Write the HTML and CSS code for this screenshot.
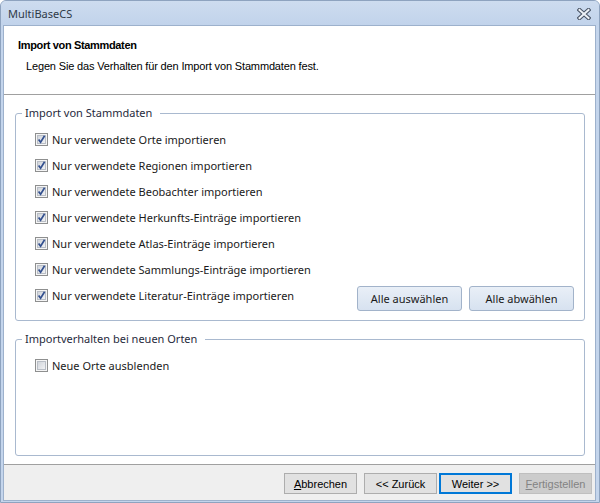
FILE: index.html
```html
<!DOCTYPE html>
<html lang="de">
<head>
<meta charset="utf-8">
<title>MultiBaseCS</title>
<link rel="stylesheet" href="styles.css">
</head>
<body>
<svg class="defs" width="0" height="0" aria-hidden="true">
  <defs>
    <linearGradient id="cbg" x1="0" y1="0" x2="1" y2="1">
      <stop offset="0" stop-color="#cfd3d9"/>
      <stop offset="1" stop-color="#f3f4f6"/>
    </linearGradient>
    <symbol id="cb-on" viewBox="0 0 13 13">
      <rect x="0.5" y="0.5" width="12" height="12" fill="#f5f5f5" stroke="#8e8f8f"/>
      <rect x="2.5" y="2.5" width="8" height="8" fill="url(#cbg)" stroke="#b9bec6"/>
      <path d="M3.6 6.4 L5.6 9.2 L9.6 2.8" fill="none" stroke="#33508f" stroke-width="1.7"/>
    </symbol>
    <symbol id="cb-off" viewBox="0 0 13 13">
      <rect x="0.5" y="0.5" width="12" height="12" fill="#f5f5f5" stroke="#8e8f8f"/>
      <rect x="2.5" y="2.5" width="8" height="8" fill="url(#cbg)" stroke="#b9bec6"/>
    </symbol>
  </defs>
</svg>
<div class="window">
  <div class="titlebar">
    <span class="title">MultiBaseCS</span>
    <svg class="close" width="14" height="12" viewBox="0 0 14 12">
      <path d="M2.5 2 L11.5 10 M11.5 2 L2.5 10" stroke="#4a5566" stroke-width="4.2" stroke-linecap="square"/>
      <path d="M2.5 2 L11.5 10 M11.5 2 L2.5 10" stroke="#eef2f7" stroke-width="2" stroke-linecap="square"/>
    </svg>
  </div>
  <div class="client">
    <div class="header">
      <div class="h-title">Import von Stammdaten</div>
      <div class="h-sub">Legen Sie das Verhalten für den Import von Stammdaten fest.</div>
    </div>
    <div class="body">
      <fieldset class="group g1">
        <legend>Import von Stammdaten</legend>
        <div class="rows">
          <div class="row"><svg class="cb"><use href="#cb-on"/></svg><span>Nur verwendete Orte importieren</span></div>
          <div class="row"><svg class="cb"><use href="#cb-on"/></svg><span>Nur verwendete Regionen importieren</span></div>
          <div class="row"><svg class="cb"><use href="#cb-on"/></svg><span>Nur verwendete Beobachter importieren</span></div>
          <div class="row"><svg class="cb"><use href="#cb-on"/></svg><span>Nur verwendete Herkunfts-Einträge importieren</span></div>
          <div class="row"><svg class="cb"><use href="#cb-on"/></svg><span>Nur verwendete Atlas-Einträge importieren</span></div>
          <div class="row"><svg class="cb"><use href="#cb-on"/></svg><span>Nur verwendete Sammlungs-Einträge importieren</span></div>
          <div class="row last">
            <div class="check"><svg class="cb"><use href="#cb-on"/></svg><span>Nur verwendete Literatur-Einträge importieren</span></div>
            <div class="sel-btns">
              <button class="btn-blue">Alle auswählen</button>
              <button class="btn-blue">Alle abwählen</button>
            </div>
          </div>
        </div>
      </fieldset>
      <fieldset class="group g2">
        <legend>Importverhalten bei neuen Orten</legend>
        <div class="rows">
          <div class="row"><svg class="cb"><use href="#cb-off"/></svg><span>Neue Orte ausblenden</span></div>
        </div>
      </fieldset>
    </div>
    <div class="footer">
      <button class="btn"><u>A</u>bbrechen</button>
      <button class="btn back">&lt;&lt; Zurück</button>
      <button class="btn next">Weiter &gt;&gt;</button>
      <button class="btn disabled"><u>F</u>ertigstellen</button>
    </div>
  </div>
</div>
</body>
</html>
```
FILE: styles.css
```css
* { box-sizing: border-box; }
html, body { margin: 0; padding: 0; background: #ffffff; }
.defs { position: absolute; width: 0; height: 0; overflow: hidden; }

.window {
  width: 600px;
  height: 503px;
  border: 1px solid #8ea3bf;
  border-radius: 6px 6px 0 0;
  background: #c4d5ec;
  display: flex;
  flex-direction: column;
  font-family: "Segoe UI", "Noto Sans", "Open Sans", sans-serif;
}

.titlebar {
  height: 24px;
  flex: none;
  display: flex;
  align-items: center;
  justify-content: space-between;
  padding: 0 8px 0 7px;
  background: linear-gradient(#cddcef, #c1d3eb);
  border-radius: 5px 5px 0 0;
}
.title { font-size: 11px; color: #2f3a48; }
.close { display: block; margin-top: 1px; }

.client {
  flex: 1;
  margin: 0 3px 1px 2px;
  border: 1px solid #9db1cc;
  background: #ffffff;
  display: flex;
  flex-direction: column;
  min-height: 0;
}

.header {
  height: 69px;
  flex: none;
  border-bottom: 1px solid #a0a0a0;
  padding: 12px 0 0 14px;
  font-family: "Liberation Sans", Arial, sans-serif;
  font-size: 11px;
  color: #000;
}
.h-title { font-weight: bold; line-height: 14px; letter-spacing: -0.35px; }
.h-sub { line-height: 14px; margin-top: 7px; padding-left: 8px; letter-spacing: -0.15px; }

.body {
  flex: 1;
  display: flex;
  flex-direction: column;
  padding: 10px 10px 8px 11px;
  min-height: 0;
}

.group {
  margin: 0;
  border: 1px solid #a9b9cf;
  border-radius: 3px;
  padding: 0 10px 12px 19px;
  min-width: 0;
}
.group legend {
  margin-left: -13px;
  padding: 0 8px 0 3px;
  font-size: 11px;
  line-height: 16px;
  color: #1f2a3c;
}
.g2 { margin-top: 10px; flex: 1; }

.rows { margin-top: 5px; }
.row, .check {
  height: 26px;
  display: flex;
  align-items: center;
  font-size: 11px;
  color: #1a1a1a;
}
.cb { width: 13px; height: 13px; flex: none; margin-right: 4px; }
.row.last { justify-content: space-between; align-items: flex-start; }

.sel-btns { display: flex; gap: 7px; margin-top: 4px; }
.btn-blue {
  width: 105px;
  height: 25px;
  padding: 0;
  font-family: inherit;
  font-size: 11px;
  color: #1a1a1a;
  background: linear-gradient(#e9eff7, #d7e2f0);
  border: 1px solid #a2b3ca;
  border-radius: 3px;
}

.footer {
  height: 36px;
  flex: none;
  border-top: 1px solid #a0a0a0;
  background: #efefef;
  display: flex;
  justify-content: flex-end;
  align-items: flex-start;
  padding: 8px 3px 0 0;
}
.btn {
  width: 73px;
  height: 21px;
  padding: 0;
  margin-left: 7px;
  font-family: "Liberation Sans", Arial, sans-serif;
  font-size: 11px;
  color: #000;
  background: #e1e1e1;
  border: 1px solid #adadad;
  border-radius: 0;
}
.btn.next { margin-left: 2px; border: 2px solid #0078d7; }
.btn.disabled { background: #cccccc; border-color: #bfbfbf; color: #838383; margin-left: 7px; }
```
